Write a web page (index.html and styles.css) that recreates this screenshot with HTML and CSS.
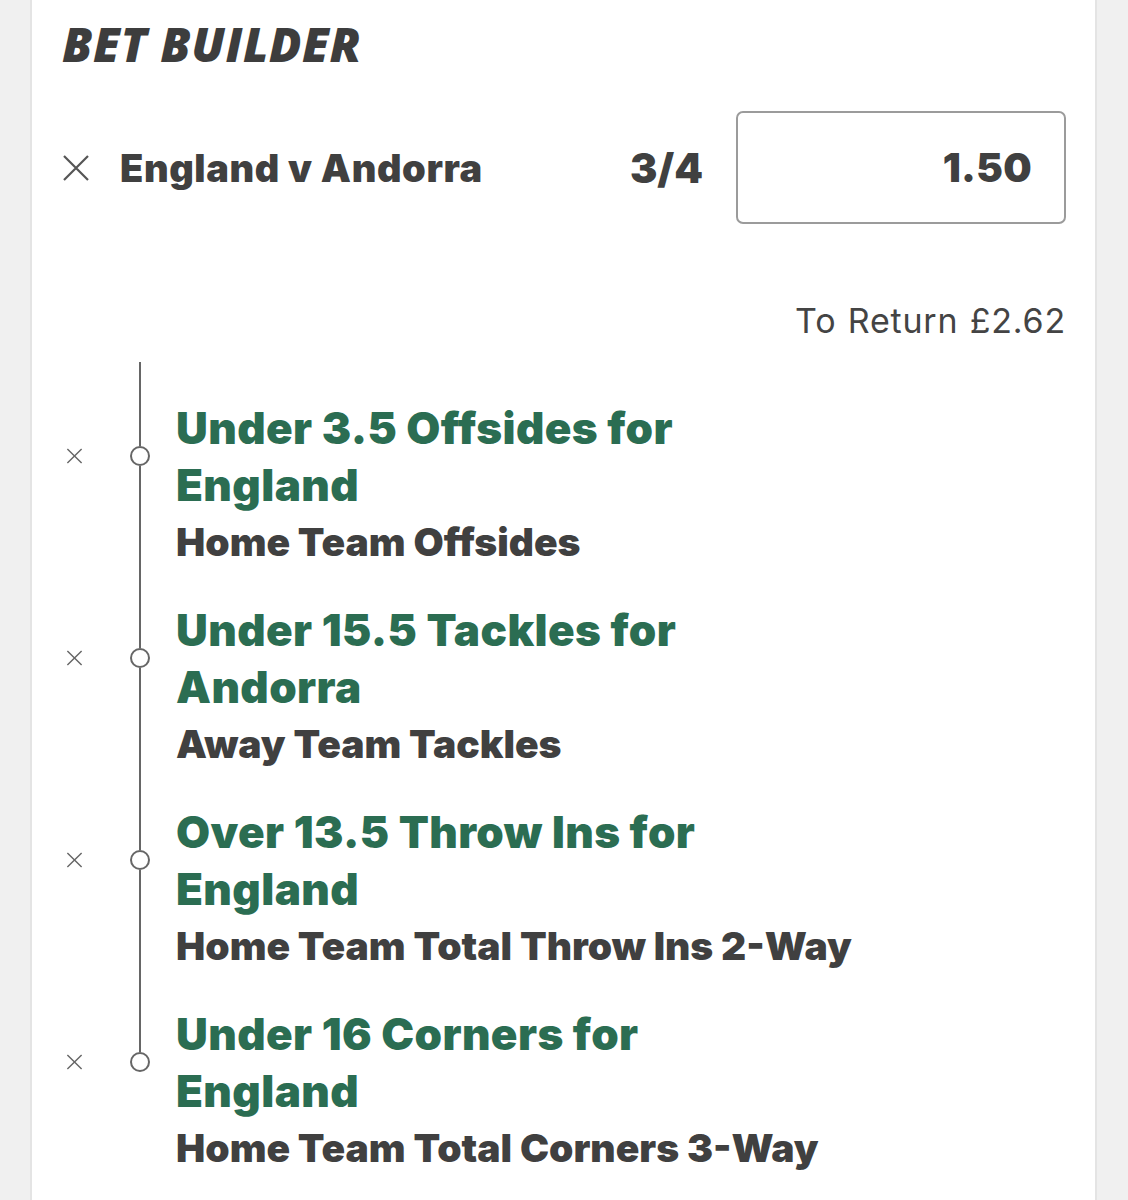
FILE: index.html
```html
<!DOCTYPE html>
<html lang="en">
<head>
<meta charset="utf-8">
<title>Bet Builder</title>
<link rel="stylesheet" href="styles.css">
</head>
<body>
<div class="page">
  <section class="card">
    <h1 class="title">BET BUILDER</h1>

    <div class="bet-row">
      <svg class="remove-big" viewBox="0 0 28 28" aria-hidden="true"><path d="M2 2 L26 26 M26 2 L2 26" /></svg>
      <div class="match">England v Andorra</div>
      <div class="odds">3/4</div>
      <div class="stake">1.50</div>
    </div>

    <div class="return">To Return £2.62</div>

    <div class="timeline">
      <div class="leg leg-first">
        <div class="x-col"><svg class="remove-small" viewBox="0 0 18 18" aria-hidden="true"><path d="M1 1 L17 17 M17 1 L1 17" /></svg></div>
        <div class="rail"><span class="seg-top"></span><span class="dot"></span><span class="seg-bottom"></span></div>
        <div class="leg-text">
          <div class="sel">Under 3.5 Offsides for<br>England</div>
          <div class="market">Home Team Offsides</div>
        </div>
      </div>
      <div class="leg">
        <div class="x-col"><svg class="remove-small" viewBox="0 0 18 18" aria-hidden="true"><path d="M1 1 L17 17 M17 1 L1 17" /></svg></div>
        <div class="rail"><span class="seg-top"></span><span class="dot"></span><span class="seg-bottom"></span></div>
        <div class="leg-text">
          <div class="sel">Under 15.5 Tackles for<br>Andorra</div>
          <div class="market">Away Team Tackles</div>
        </div>
      </div>
      <div class="leg">
        <div class="x-col"><svg class="remove-small" viewBox="0 0 18 18" aria-hidden="true"><path d="M1 1 L17 17 M17 1 L1 17" /></svg></div>
        <div class="rail"><span class="seg-top"></span><span class="dot"></span><span class="seg-bottom"></span></div>
        <div class="leg-text">
          <div class="sel">Over 13.5 Throw Ins for<br>England</div>
          <div class="market">Home Team Total Throw Ins 2-Way</div>
        </div>
      </div>
      <div class="leg leg-last">
        <div class="x-col"><svg class="remove-small" viewBox="0 0 18 18" aria-hidden="true"><path d="M1 1 L17 17 M17 1 L1 17" /></svg></div>
        <div class="rail"><span class="seg-top"></span><span class="dot"></span><span class="seg-bottom"></span></div>
        <div class="leg-text">
          <div class="sel">Under 16 Corners for<br>England</div>
          <div class="market">Home Team Total Corners 3-Way</div>
        </div>
      </div>
    </div>
  </section>
</div>
</body>
</html>
```

FILE: styles.css
```css
* { box-sizing: border-box; }

html, body {
  margin: 0;
  padding: 0;
  background: #f0f0f0;
}

body {
  font-family: Inter, "Liberation Sans", sans-serif;
  color: #3f3f3f;
}

.page {
  width: 1128px;
  min-height: 1200px;
  display: flex;
}

.card {
  margin-left: 30px;
  width: 1067px;
  min-height: 1200px;
  background: #ffffff;
  border-left: 2px solid #e4e4e4;
  border-right: 2px solid #e4e4e4;
  padding: 14px 29px 0 30px;
}

.title {
  margin: 0;
  font-family: "Open Sans", Inter, sans-serif;
  font-style: italic;
  font-weight: 800;
  font-size: 48px;
  line-height: 60px;
  letter-spacing: 0.5px;
  color: #3d3d3d;
}

.bet-row {
  margin-top: 37px;
  height: 113px;
  display: flex;
  align-items: center;
}

.remove-big {
  width: 28px;
  height: 28px;
  flex: none;
  fill: none;
  stroke: #555555;
  stroke-width: 2.2;
}

.match {
  margin-left: 30px;
  flex: 1;
  font-weight: 900;
  font-size: 38px;
  letter-spacing: 0.6px;
  color: #404040;
}

.odds {
  font-weight: 900;
  font-size: 41px;
  color: #404040;
  margin-right: 33px;
}

.stake {
  width: 330px;
  height: 113px;
  border: 2px solid #9b9b9b;
  border-radius: 7px;
  display: flex;
  align-items: center;
  justify-content: flex-end;
  padding-right: 32px;
  font-weight: 900;
  font-size: 40px;
  letter-spacing: 0.3px;
  color: #404040;
}

.return {
  margin-top: 77px;
  text-align: right;
  font-size: 34px;
  line-height: 40px;
  font-weight: 400;
  letter-spacing: 0.8px;
  word-spacing: 1px;
  color: #444444;
}

.timeline {
  margin-top: 21px;
}

.leg {
  --top: 80px;
  display: flex;
  align-items: stretch;
}

.leg-first {
  --top: 85px;
}

.x-col {
  width: 17px;
  margin-left: 4px;
  padding-top: calc(var(--top) + 1px);
  flex: none;
}

.remove-small {
  display: block;
  width: 17px;
  height: 16px;
  fill: none;
  stroke: #666666;
  stroke-width: 1.6;
}

.rail {
  width: 20px;
  margin-left: 47px;
  flex: none;
  display: flex;
  flex-direction: column;
  align-items: center;
}

.seg-top {
  width: 2px;
  height: calc(var(--top) - 1px);
  background: #666666;
}

.dot {
  width: 20px;
  height: 20px;
  border: 2px solid #666666;
  border-radius: 50%;
  background: #ffffff;
  flex: none;
}

.seg-bottom {
  width: 2px;
  flex: 1;
  background: #666666;
}

.leg-last .seg-bottom {
  background: transparent;
}

.leg-text {
  margin-left: 26px;
  padding-top: 33px;
}

.leg-first .leg-text {
  padding-top: 38px;
}

.sel {
  font-weight: 900;
  font-size: 44px;
  line-height: 57px;
  letter-spacing: 0.4px;
  color: #2b6d52;
}

.market {
  font-weight: 900;
  font-size: 39px;
  line-height: 55px;
  color: #404040;
}
```
